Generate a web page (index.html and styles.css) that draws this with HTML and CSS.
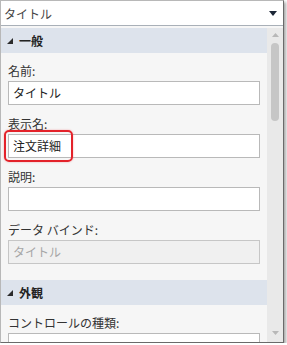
FILE: index.html
```html
<!DOCTYPE html>
<html lang="ja">
<head>
  <meta charset="UTF-8">
  <meta name="viewport" content="width=device-width, initial-scale=1.0">
  <title>プロパティ</title>
  <link rel="stylesheet" href="styles.css">
</head>
<body>

<div class="frame">
  <!-- 対象の選択 -->
  <div class="combo">
    <span class="combo-text">タイトル</span>
    <svg class="combo-arrow" width="8" height="5" viewBox="0 0 8 5"><polygon points="0,0 8,0 4,5" fill="#1c2636"/></svg>
  </div>

  <div class="body">
    <div class="panel">
      <!-- 一般 -->
      <div class="section-header">
        <svg class="expander" width="6" height="6" viewBox="0 0 6 6"><polygon points="6,0 6,6 0,6" fill="#2b2b2b"/></svg>
        <span>一般</span>
      </div>
      <div class="section">
        <div class="field">
          <label>名前:</label>
          <div class="input">タイトル</div>
        </div>
        <div class="field highlighted">
          <label>表示名:</label>
          <div class="input">注文詳細</div>
          <div class="callout"></div>
        </div>
        <div class="field">
          <label>説明:</label>
          <div class="input"></div>
        </div>
        <div class="field">
          <label>データ バインド:</label>
          <div class="input disabled">タイトル</div>
        </div>
      </div>

      <!-- 外観 -->
      <div class="section-header">
        <svg class="expander" width="6" height="6" viewBox="0 0 6 6"><polygon points="6,0 6,6 0,6" fill="#2b2b2b"/></svg>
        <span>外観</span>
      </div>
      <div class="section">
        <div class="field">
          <label>コントロールの種類:</label>
          <div class="input"></div>
        </div>
      </div>
    </div>

    <div class="scrollbar">
      <svg class="scroll-arrow" width="7" height="4" viewBox="0 0 7 4"><polygon points="0,4 7,4 3.5,0" fill="#b8b8b8"/></svg>
      <div class="thumb"></div>
      <div class="track"></div>
      <svg class="scroll-arrow" width="7" height="4" viewBox="0 0 7 4"><polygon points="0,0 7,0 3.5,4" fill="#b8b8b8"/></svg>
    </div>
  </div>
</div>

</body>
</html>
```

FILE: styles.css
```css
body {
  margin: 0;
  background-color: #ffffff;
  font-family: "Noto Sans CJK JP", "Noto Sans", sans-serif;
  font-size: 12px;
  color: #333333;
}
.frame {
  width: 282px;
  height: 341px;
  border-left: 1px solid #b8b8b8;
  border-top: 1px solid #b8b8b8;
  border-right: 1px solid #6a6a6a;
  border-bottom: 1px solid #6a6a6a;
  box-shadow: 2px 2px 3px rgba(0, 0, 0, 0.35);
  background-color: #f6f6f6;
  display: flex;
  flex-direction: column;
  overflow: hidden;
}
.combo {
  height: 24px;
  flex: none;
  background-color: #ffffff;
  border-bottom: 1px solid #a9b0b8;
  display: flex;
  align-items: center;
  justify-content: space-between;
  padding: 0 6px 0 3px;
}
.combo-text {
  color: #444444;
  font-size: 12px;
}
.body {
  flex: 1;
  display: flex;
  padding-top: 2px;
  min-height: 0;
}
.panel {
  flex: 1;
  overflow: hidden;
}
.section-header {
  height: 25px;
  background-color: #dde3ec;
  display: flex;
  align-items: center;
  gap: 6px;
  padding-left: 6px;
  font-weight: bold;
  font-size: 12px;
  color: #222222;
}
.expander {
  margin-top: 1px;
}
.section {
  padding: 10px 7px 5px 7px;
}
.field {
  margin-bottom: 11px;
  position: relative;
}
.field label {
  display: block;
  line-height: 16px;
  margin-bottom: 2px;
  color: #333333;
}
.input {
  height: 22px;
  line-height: 22px;
  border: 1px solid #b9b9b9;
  background-color: #ffffff;
  padding-left: 4px;
  color: #222222;
}
.input.disabled {
  background-color: #f0f0f0;
  border-color: #c6c6c6;
  color: #a6a6a6;
}
.callout {
  position: absolute;
  left: -4px;
  top: 14px;
  width: 65px;
  height: 28px;
  border: 2px solid #e3222a;
  border-radius: 5px;
  box-shadow: 0 0 2px rgba(227, 34, 42, 0.4);
}
.scrollbar {
  width: 16px;
  flex: none;
  background-color: #e9e9e9;
  display: flex;
  flex-direction: column;
  align-items: center;
  padding: 5px 0 7px 0;
}
.thumb {
  width: 8px;
  height: 78px;
  margin-top: 6px;
  border-radius: 4px;
  background-color: #c6c6c6;
}
.track {
  flex: 1;
}
```
